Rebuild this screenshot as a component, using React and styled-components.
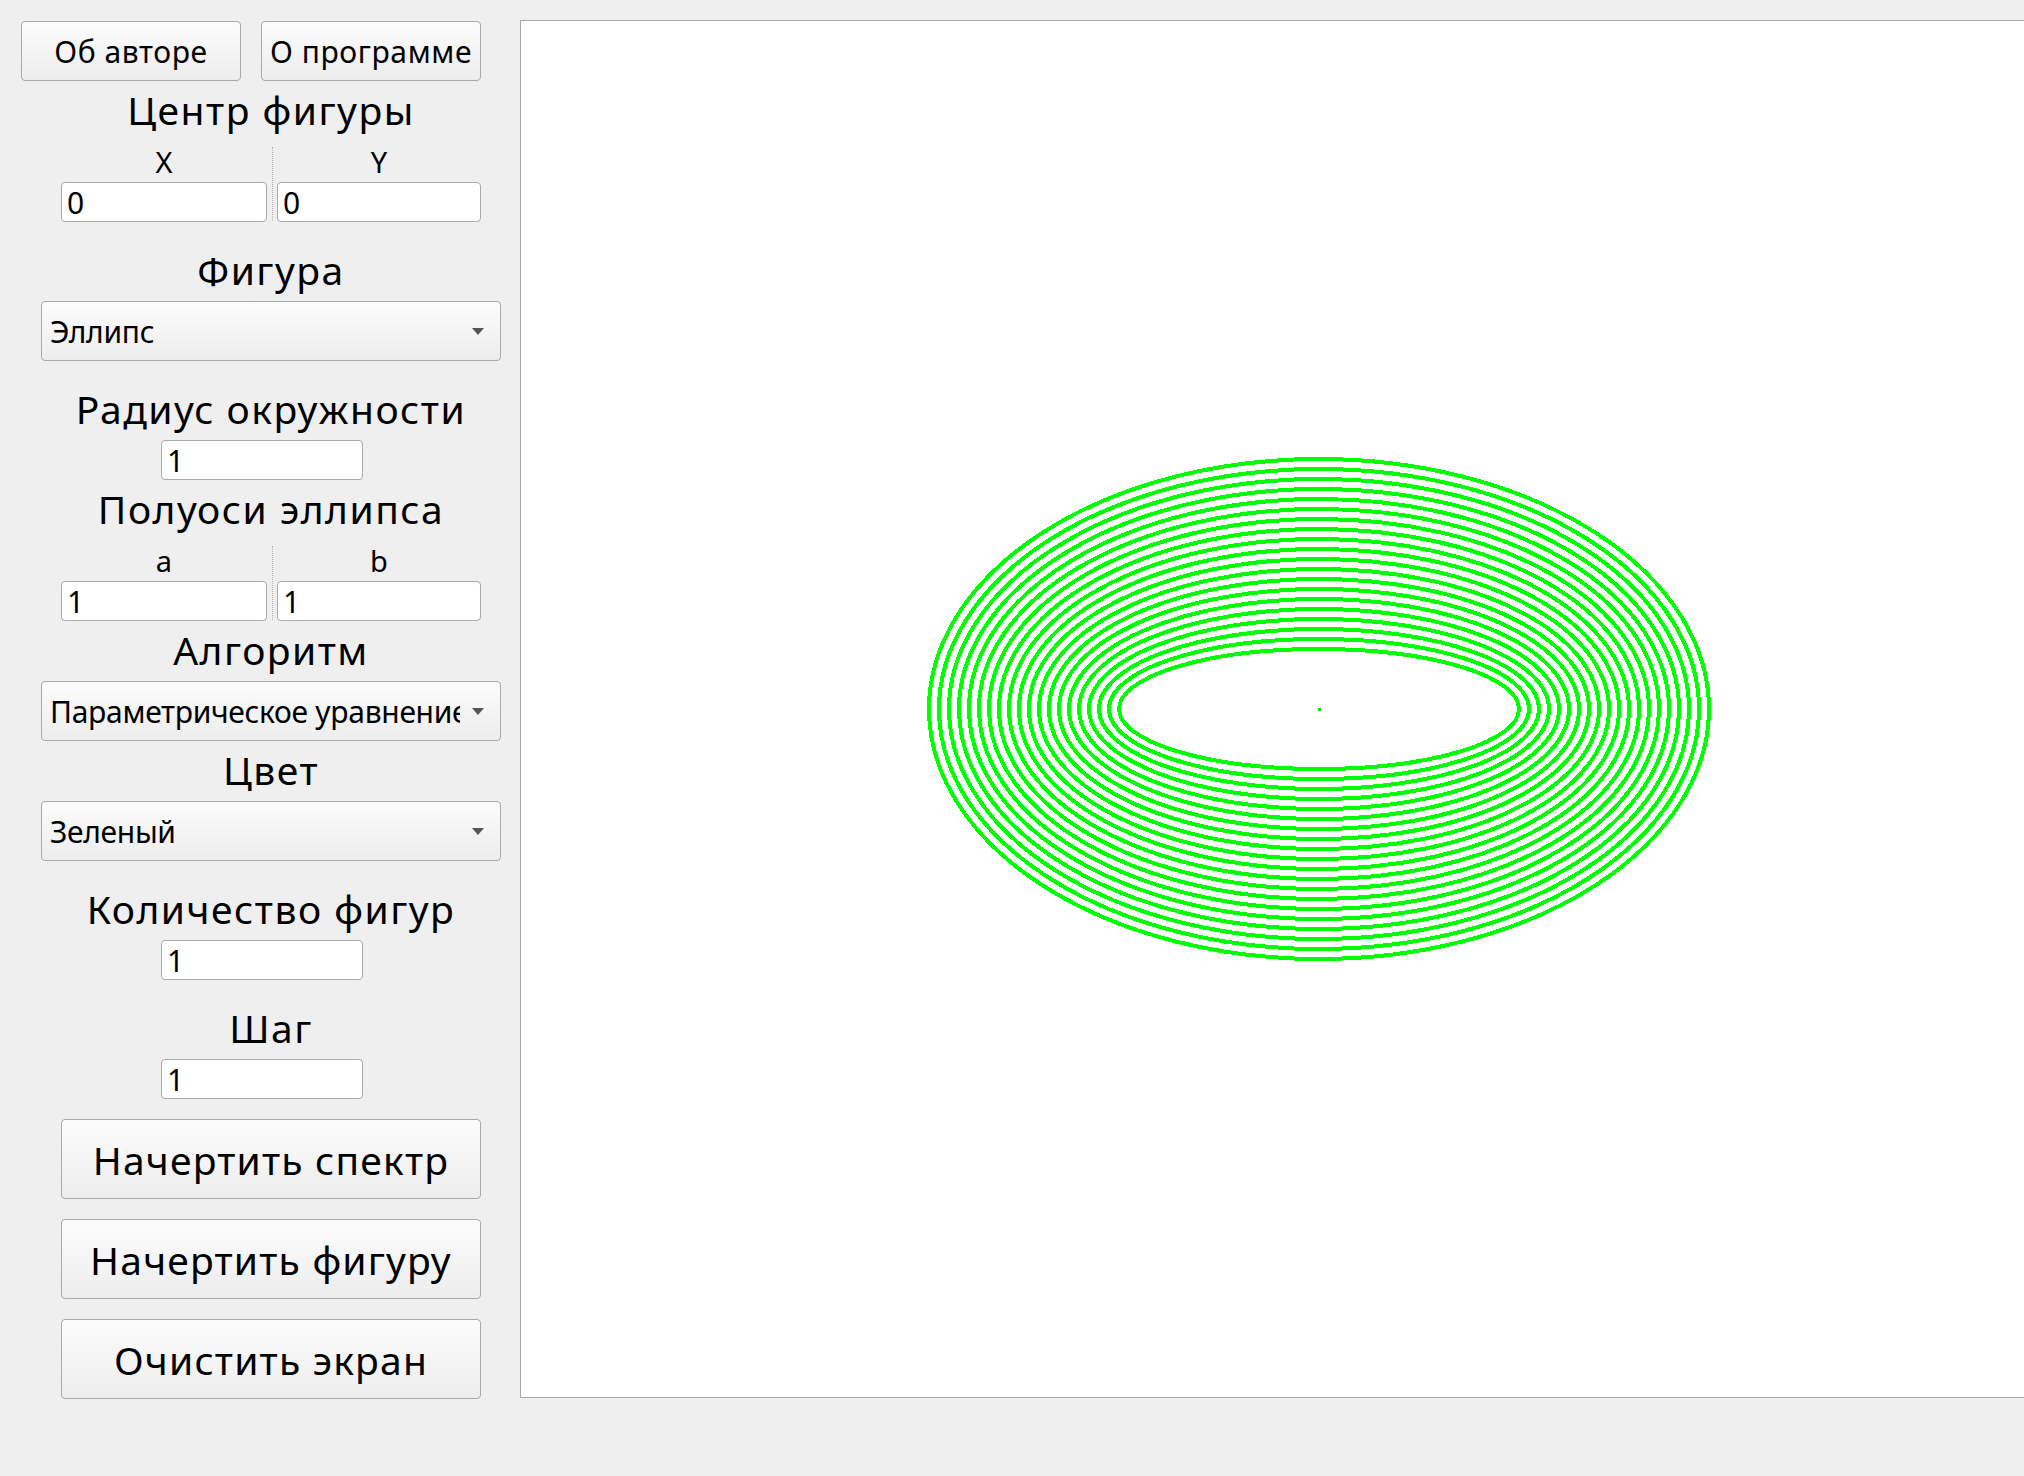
import React from 'react';
import styled, { createGlobalStyle, css } from 'styled-components';

const GlobalStyle = createGlobalStyle`
    html,
    body {
        margin: 0;
        padding: 0;
        background: #efefef;
        overflow: hidden;
    }

    body {
        font-family: "Noto Sans", "Liberation Sans", sans-serif;
        color: #000;
    }
`;

/* Qt fusion-like raised surface, shared by push buttons and combo boxes */
const raised = css`
    box-sizing: border-box;
    border: 1px solid #a9a9a9;
    border-radius: 4px;
    background: linear-gradient(#fcfcfc, #ededed);
`;

const Window = styled.div`
    display: flex;
    align-items: flex-start;
    width: 2024px;
    height: 1476px;
    overflow: hidden;
`;

const Panel = styled.div`
    flex: none;
    display: flex;
    flex-direction: column;
    align-items: center;
    width: 500px;
    padding: 21px 0 0 21px;
`;

const TopRow = styled.div`
    display: flex;
    gap: 20px;
    align-self: flex-start;
`;

const PushButton = styled.button`
    ${raised}
    width: ${props => (props.$big ? 420 : 220)}px;
    height: ${props => (props.$big ? 80 : 60)}px;
    margin-top: ${props => (props.$big ? 20 : 0)}px;
    padding: 0;
    font-family: inherit;
    font-size: ${props => (props.$big ? 39 : 30)}px;
    letter-spacing: ${props => (props.$big ? 1.2 : 0.6)}px;
    color: #000;
    white-space: nowrap;
`;

const Title = styled.div`
    height: 38px;
    margin: ${props => (props.$spaced ? 29 : 10)}px 0 12px;
    font-size: 39px;
    line-height: 38px;
    letter-spacing: 1.5px;
    white-space: nowrap;
`;

const Field = styled.input`
    box-sizing: border-box;
    width: ${props => props.$width}px;
    height: 40px;
    margin: 0;
    padding: 0 5px;
    border: 1px solid #aaaaaa;
    border-radius: 4px;
    background: #fff;
    font-family: inherit;
    font-size: 30px;
    color: #000;
    outline: none;
`;

const SingleField = styled(Field)`
    align-self: flex-start;
    margin-left: 140px;
`;

const Pair = styled.div`
    display: grid;
    grid-template-columns: 206px 10px 204px;
    grid-template-rows: 24px 40px;
    row-gap: 8px;
    width: 420px;
    padding-top: 9px;
`;

const PairLabel = styled.div`
    grid-column: ${props => props.$col};
    grid-row: 1;
    font-size: 29px;
    line-height: 24px;
    text-align: center;
`;

const PairSlot = styled.div`
    grid-column: ${props => props.$col};
    grid-row: 2;
    display: flex;
`;

const Divider = styled.div`
    grid-column: 2;
    grid-row: 1 / span 2;
    justify-self: center;
    width: 0;
    margin: -3px 0 1px;
    border-left: 1px dotted #b4b4b4;
`;

const Combo = styled.div`
    ${raised}
    position: relative;
    display: flex;
    align-items: center;
    width: 460px;
    height: 60px;
    padding: 0 40px 0 8px;
    font-size: 30px;
    letter-spacing: -0.3px;

    /* drop-down arrow */
    &::after {
        content: '';
        position: absolute;
        top: 50%;
        right: 16px;
        margin-top: -3px;
        border-left: 6px solid transparent;
        border-right: 6px solid transparent;
        border-top: 7px solid #555;
    }
`;

const ComboText = styled.span`
    flex: 1;
    overflow: hidden;
    white-space: nowrap;
`;

const Canvas = styled.div`
    flex: none;
    box-sizing: border-box;
    width: 1598px;
    height: 1378px;
    margin: 20px 0 0 -1px;
    border: 1px solid #a8a8a8;
    background: #fff;

    & svg {
        display: block;
    }
`;

const CANVAS_W = 1596;
const CANVAS_H = 1376;
const CX = 798;
const CY = 688;

// spectrum: 20 ellipses, both semi-axes grow by 10 per step
const ellipses = Array.from({ length: 20 }, (_, i) => ({ rx: 200 + i * 10, ry: 60 + i * 10 }));

function CoordPair({ left, right, leftValue, rightValue }) {
    return (
        <Pair>
            <PairLabel $col={1}>{left}</PairLabel>
            <Divider />
            <PairLabel $col={3}>{right}</PairLabel>
            <PairSlot $col={1}>
                <Field $width={206} defaultValue={leftValue} />
            </PairSlot>
            <PairSlot $col={3}>
                <Field $width={204} defaultValue={rightValue} />
            </PairSlot>
        </Pair>
    );
}

export default function App() {
    return (
        <>
            <GlobalStyle />
            <Window>
                <Panel>
                    <TopRow>
                        <PushButton type="button">Об авторе</PushButton>
                        <PushButton type="button">О программе</PushButton>
                    </TopRow>

                    <Title>Центр фигуры</Title>
                    <CoordPair left="X" right="Y" leftValue="0" rightValue="0" />

                    <Title $spaced>Фигура</Title>
                    <Combo>
                        <ComboText>Эллипс</ComboText>
                    </Combo>

                    <Title $spaced>Радиус окружности</Title>
                    <SingleField $width={202} defaultValue="1" />

                    <Title>Полуоси эллипса</Title>
                    <CoordPair left="a" right="b" leftValue="1" rightValue="1" />

                    <Title>Алгоритм</Title>
                    <Combo>
                        <ComboText>Параметрическое уравнение</ComboText>
                    </Combo>

                    <Title>Цвет</Title>
                    <Combo>
                        <ComboText>Зеленый</ComboText>
                    </Combo>

                    <Title $spaced>Количество фигур</Title>
                    <SingleField $width={202} defaultValue="1" />

                    <Title $spaced>Шаг</Title>
                    <SingleField $width={202} defaultValue="1" />

                    <PushButton type="button" $big>Начертить спектр</PushButton>
                    <PushButton type="button" $big>Начертить фигуру</PushButton>
                    <PushButton type="button" $big>Очистить экран</PushButton>
                </Panel>

                <Canvas>
                    <svg width={CANVAS_W} height={CANVAS_H} viewBox={`0 0 ${CANVAS_W} ${CANVAS_H}`}>
                        <g fill="none" stroke="#00ff00" strokeWidth="4" shapeRendering="crispEdges">
                            {ellipses.map(e => (
                                <ellipse key={e.rx} cx={CX} cy={CY} rx={e.rx} ry={e.ry} />
                            ))}
                        </g>
                        <rect x={CX - 1} y={CY - 1} width="3" height="3" fill="#00e000" />
                    </svg>
                </Canvas>
            </Window>
        </>
    );
}
